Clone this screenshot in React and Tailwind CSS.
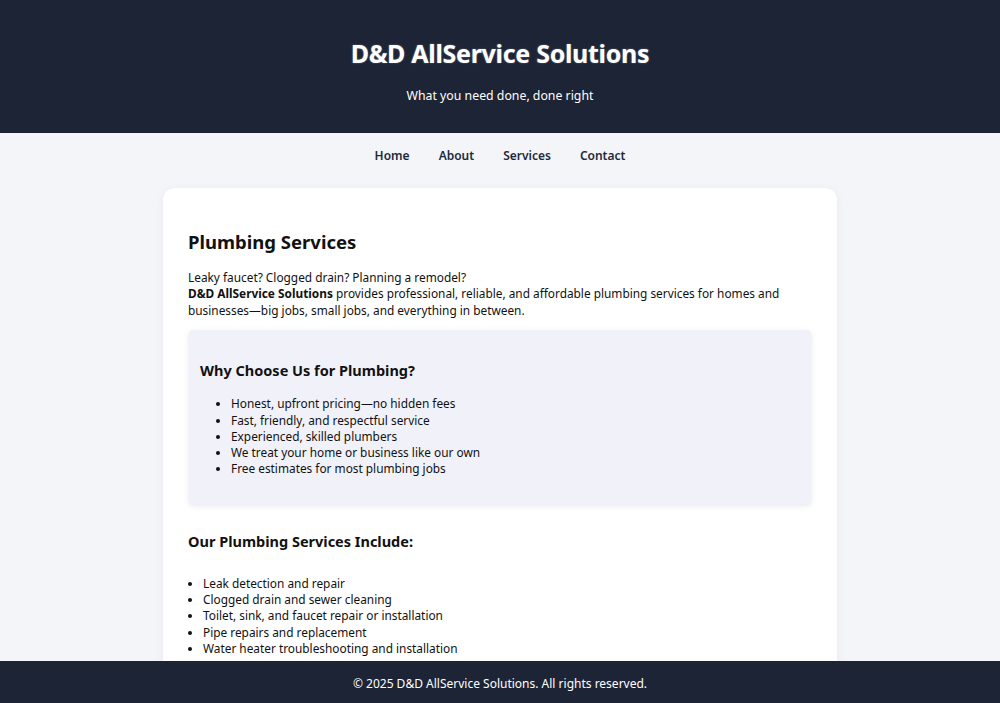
import React from 'react';

const whyUs = [
  'Honest, upfront pricing—no hidden fees',
  'Fast, friendly, and respectful service',
  'Experienced, skilled plumbers',
  'We treat your home or business like our own',
  'Free estimates for most plumbing jobs',
];

const services = [
  'Leak detection and repair',
  'Clogged drain and sewer cleaning',
  'Toilet, sink, and faucet repair or installation',
  'Pipe repairs and replacement',
  'Water heater troubleshooting and installation',
];

export default function App() {
  return (
    <div className="min-h-screen bg-[#f3f5f9] text-[#111] font-['Noto_Sans',Arial,sans-serif] pb-[60px]">
      <header className="bg-[#1c2436] text-white text-center h-[133px] flex flex-col items-center pt-[36px]">
        <h1 className="text-[25px] font-bold leading-[34px] tracking-[-0.3px] [text-shadow:0_0_2px_rgba(255,255,255,0.35)]">
          D&amp;D AllService Solutions
        </h1>
        <p className="text-[12.3px] mt-[17px] leading-[18px]">What you need done, done right</p>
      </header>

      <nav className="flex justify-center gap-[29px] pt-[14px] pb-[10px] text-[12px] font-semibold text-[#1e293b] leading-[18px]">
        <a href="#">Home</a>
        <a href="#">About</a>
        <a href="#">Services</a>
        <a href="#">Contact</a>
      </nav>

      <main className="mx-auto mt-[13px] w-[674px] bg-white rounded-[12px] shadow-[0_2px_10px_rgba(0,0,0,0.05)] px-[25px] pt-[41px] pb-[30px]">
        <h2 className="text-[18.5px] font-bold leading-[26px] mb-[14px]">Plumbing Services</h2>
        <p className="text-[11.85px] leading-[16.4px]">
          Leaky faucet? Clogged drain? Planning a remodel?
          <br />
          <strong className="font-bold">D&amp;D AllService Solutions</strong> provides professional, reliable, and
          affordable plumbing services for homes and businesses—big jobs, small jobs, and everything in between.
        </p>

        <section className="mt-[12px] bg-[#f1f2f9] rounded-[6px] shadow-[0_1px_6px_rgba(0,0,0,0.06)] px-[12px] pt-[30px] pb-[29px]">
          <h3 className="text-[14.5px] font-bold leading-[20px] mb-[15px]">Why Choose Us for Plumbing?</h3>
          <ul className="list-disc pl-[31px] text-[11.85px] leading-[16.3px]">
            {whyUs.map((item) => (
              <li key={item}>{item}</li>
            ))}
          </ul>
        </section>

        <h3 className="mt-[25px] text-[14.5px] font-bold leading-[20px] mb-[24px]">Our Plumbing Services Include:</h3>
        <ul className="list-disc pl-[15px] text-[11.85px] leading-[16.3px]">
          {services.map((item) => (
            <li key={item}>{item}</li>
          ))}
        </ul>
      </main>

      <footer className="fixed bottom-0 left-0 right-0 h-[42px] pt-[3px] bg-[#1c2436] text-white flex items-center justify-center text-[12px]">
        © 2025 D&amp;D AllService Solutions. All rights reserved.
      </footer>
    </div>
  );
}
